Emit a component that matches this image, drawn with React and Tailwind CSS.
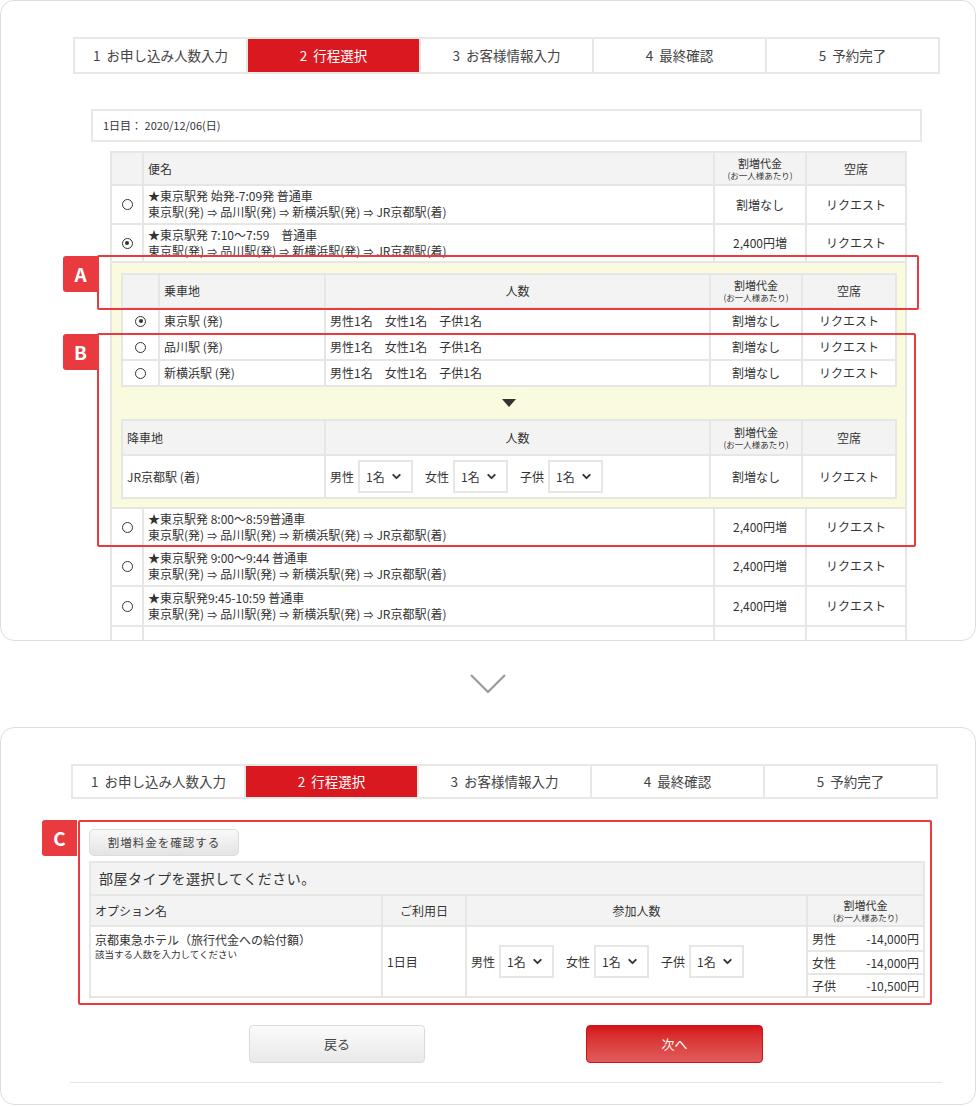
import React from "react";
import { ChevronDown } from "lucide-react";

const font = { fontFamily: '"Noto Sans CJK JP", "Noto Sans", sans-serif' };

const steps = [
  ["1", "お申し込み人数入力"],
  ["2", "行程選択"],
  ["3", "お客様情報入力"],
  ["4", "最終確認"],
  ["5", "予約完了"],
];

const Stepper = ({ h }) => (
  <div className={`flex w-[867px] border-2 border-[#e8e8e5] ${h}`}>
    {steps.map(([n, s], i) => (
      <div
        key={s}
        className={`flex flex-1 items-center justify-center text-[13.5px] ${
          i > 0 ? "border-l-2 border-[#e8e8e5]" : ""
        } ${i === 1 ? "bg-[#d9191f] text-white" : "text-[#444]"}`}
      >
        <span className="mr-[6px]">{n}</span>
        {s}
      </div>
    ))}
  </div>
);

const Radio = ({ on }) => (
  <span className="mx-auto flex h-[11px] w-[11px] items-center justify-center rounded-full border-[1.5px] border-[#333]">
    {on && <span className="h-[4px] w-[4px] rounded-full bg-[#333]" />}
  </span>
);

const Sel = () => (
  <span className="inline-flex h-[33px] w-[55px] items-center justify-between border-2 border-[#e6e6e2] bg-white pl-[6px] pr-[8px] text-[12px]">
    1名 <ChevronDown size={13} strokeWidth={3.5} className="text-[#333]" />
  </span>
);

const PriceHead = () => (
  <div className="flex flex-col items-center">
    <span className="block text-[11px] leading-[13px]">割増代金</span>
    <span className="block text-[8.5px] leading-[11px]">(お一人様あたり)</span>
  </div>
);

const td = "border-2 border-[#e6e6e2]";
const th = "border-2 border-[#e6e6e2] bg-[#f3f3f3] font-normal";

const Arrow = () => <span className="mx-[3px] text-[10px]">⇒</span>;

const Route = () => (
  <div>
    東京駅(発)
    <Arrow />
    品川駅(発)
    <Arrow />
    新横浜駅(発)
    <Arrow />
    JR京都駅(着)
  </div>
);

const TrainRow = ({ title, price, on, h = "h-[40px]" }) => (
  <tr className={h}>
    <td className={td}>
      <Radio on={on} />
    </td>
    <td className={`${td} pl-[4px] text-left leading-[16px]`}>
      <div>{title}</div>
      <Route />
    </td>
    <td className={td}>{price}</td>
    <td className={td}>リクエスト</td>
  </tr>
);

const Boarding = ({ name, on }) => (
  <tr className="h-[26px] bg-white">
    <td className={td}>
      <Radio on={on} />
    </td>
    <td className={`${td} pl-[4px] text-left`}>{name}</td>
    <td className={`${td} pl-[4px] text-left`}>男性1名　女性1名　子供1名</td>
    <td className={td}>割増なし</td>
    <td className={td}>リクエスト</td>
  </tr>
);

const Tag = ({ letter, cls }) => (
  <div
    className={`absolute flex h-[36px] w-[35px] items-center justify-center rounded-l-[3px] bg-[#e93a3f] text-[19px] font-bold text-white ${cls}`}
  >
    {letter}
  </div>
);

export default function App() {
  return (
    <div className="min-h-[1106px] w-[976px] bg-white text-[#333]" style={font}>
      {/* Card 1 */}
      <div className="relative h-[641px] overflow-hidden rounded-[14px] border border-[#dedede]">
        <div className="ml-[72px] pt-[36px]">
          <Stepper h="h-[37px]" />
        </div>
        <div className="ml-[90px] mt-[35px] flex h-[33px] w-[831px] items-center border-2 border-[#e8e8e5] pl-[10px] text-[11px]">
          1日目： 2020/12/06(日)
        </div>
        <table className="ml-[109px] mt-[9px] w-[795px] table-fixed border-collapse text-center text-[12px]">
          <colgroup>
            <col className="w-[32px]" />
            <col className="w-[571px]" />
            <col className="w-[92px]" />
            <col className="w-[100px]" />
          </colgroup>
          <tbody>
            <tr className="h-[33px]">
              <th className={th}></th>
              <th className={`${th} pl-[4px] text-left`}>便名</th>
              <th className={th}>
                <PriceHead />
              </th>
              <th className={th}>空席</th>
            </tr>
            <TrainRow title="★東京駅発 始発-7:09発 普通車" price="割増なし" h="h-[39px]" />
            <TrainRow title="★東京駅発 7:10〜7:59　普通車" price="2,400円増" on h="h-[38px]" />
            <tr>
              <td colSpan={4} className="border-2 border-[#e6e6e2] bg-[#fafadf] px-[9px] pb-[8px] pt-[10px]">
                <table className="w-full table-fixed border-collapse">
                  <colgroup>
                    <col className="w-[37px]" />
                    <col className="w-[166px]" />
                    <col className="w-[385px]" />
                    <col className="w-[92px]" />
                    <col className="w-[94px]" />
                  </colgroup>
                  <tbody>
                    <tr className="h-[34px]">
                      <th className={th}></th>
                      <th className={`${th} pl-[4px] text-left`}>乗車地</th>
                      <th className={th}>人数</th>
                      <th className={th}>
                        <PriceHead />
                      </th>
                      <th className={th}>空席</th>
                    </tr>
                    <Boarding name="東京駅 (発)" on />
                    <Boarding name="品川駅 (発)" />
                    <Boarding name="新横浜駅 (発)" />
                  </tbody>
                </table>
                <div className="flex h-[32px] items-center justify-center">
                  <svg width="14" height="8" viewBox="0 0 14 8">
                    <path d="M0 0 L14 0 L7 8 Z" fill="#333" />
                  </svg>
                </div>
                <table className="w-full table-fixed border-collapse">
                  <colgroup>
                    <col className="w-[203px]" />
                    <col className="w-[385px]" />
                    <col className="w-[92px]" />
                    <col className="w-[94px]" />
                  </colgroup>
                  <tbody>
                    <tr className="h-[35px]">
                      <th className={`${th} pl-[4px] text-left`}>降車地</th>
                      <th className={th}>人数</th>
                      <th className={th}>
                        <PriceHead />
                      </th>
                      <th className={th}>空席</th>
                    </tr>
                    <tr className="h-[43px] bg-white">
                      <td className={`${td} pl-[4px] text-left`}>JR京都駅 (着)</td>
                      <td className={`${td} pl-[4px] text-left`}>
                        <div className="flex items-center">
                          <span className="mr-[4px]">男性</span>
                          <Sel />
                          <span className="ml-[12px] mr-[4px]">女性</span>
                          <Sel />
                          <span className="ml-[12px] mr-[4px]">子供</span>
                          <Sel />
                        </div>
                      </td>
                      <td className={td}>割増なし</td>
                      <td className={td}>リクエスト</td>
                    </tr>
                  </tbody>
                </table>
              </td>
            </tr>
            <TrainRow title="★東京駅発 8:00〜8:59普通車" price="2,400円増" h="h-[38px]" />
            <TrainRow title="★東京駅発 9:00〜9:44 普通車" price="2,400円増" />
            <TrainRow title="★東京駅発9:45-10:59 普通車" price="2,400円増" />
            <tr className="h-[40px]">
              <td className={td}></td>
              <td className={td}></td>
              <td className={td}></td>
              <td className={td}></td>
            </tr>
          </tbody>
        </table>

        <div className="absolute left-[96px] top-[254px] h-[55px] w-[822px] rounded-[2px] border-2 border-[#e93a3f]" />
        <Tag letter="A" cls="left-[62px] top-[255px]" />
        <div className="absolute left-[96px] top-[332px] h-[214px] w-[819px] rounded-[2px] border-2 border-[#e93a3f]" />
        <Tag letter="B" cls="left-[62px] top-[333px]" />
      </div>

      {/* arrow between */}
      <div className="flex h-[86px] items-center justify-center">
        <svg width="38" height="22" viewBox="0 0 38 22">
          <path d="M2 2 L19 19 L36 2" fill="none" stroke="#9a9a9a" strokeWidth="2.2" />
        </svg>
      </div>

      {/* Card 2 */}
      <div className="relative h-[378px] rounded-[14px] border border-[#dedede]">
        <div className="ml-[70px] pt-[36px]">
          <Stepper h="h-[35px]" />
        </div>
        <div className="ml-[88px] mt-[30px] flex h-[27px] w-[150px] items-center justify-center rounded-[5px] border border-[#dcdcdc] bg-gradient-to-b from-[#f9f9f9] to-[#e4e4e4] text-[11.5px] tracking-[1px] text-[#444]">
          割増料金を確認する
        </div>
        <table className="ml-[88px] mt-[5px] w-[834px] table-fixed border-collapse text-[12px]">
          <colgroup>
            <col className="w-[292px]" />
            <col className="w-[84px]" />
            <col className="w-[341px]" />
            <col className="w-[117px]" />
          </colgroup>
          <tbody>
            <tr className="h-[33px]">
              <th colSpan={4} className={`${th} pl-[8px] text-left text-[14px] tracking-[0.5px]`}>
                部屋タイプを選択してください。
              </th>
            </tr>
            <tr className="h-[31px]">
              <th className={`${th} pl-[4px] text-left`}>オプション名</th>
              <th className={th}>ご利用日</th>
              <th className={th}>参加人数</th>
              <th className={th}>
                <PriceHead />
              </th>
            </tr>
            <tr className="h-[71px]">
              <td className={`${td} pl-[4px] pt-[4px] align-top leading-[17px]`}>
                <div>京都東急ホテル（旅行代金への給付額）</div>
                <div className="text-[9.5px] leading-[12px]">該当する人数を入力してください</div>
              </td>
              <td className={`${td} pl-[4px]`}>1日目</td>
              <td className={`${td} pl-[4px]`}>
                <div className="flex items-center">
                  <span className="mr-[4px]">男性</span>
                  <Sel />
                  <span className="ml-[12px] mr-[4px]">女性</span>
                  <Sel />
                  <span className="ml-[12px] mr-[4px]">子供</span>
                  <Sel />
                </div>
              </td>
              <td className="border-2 border-[#e6e6e2] p-0">
                {[
                  ["男性", "-14,000円"],
                  ["女性", "-14,000円"],
                  ["子供", "-10,500円"],
                ].map(([k, v], i) => (
                  <div
                    key={k}
                    className={`flex h-[23px] items-center justify-between px-[4px] ${
                      i > 0 ? "border-t-2 border-[#e6e6e2]" : ""
                    }`}
                  >
                    <span>{k}</span>
                    <span>{v}</span>
                  </div>
                ))}
              </td>
            </tr>
          </tbody>
        </table>

        <div className="ml-[248px] mt-[27px] flex gap-[161px]">
          <div className="flex h-[38px] w-[176px] items-center justify-center rounded-[4px] border border-[#dadada] bg-gradient-to-b from-[#fbfbfb] to-[#e9e9e9] text-[13px] text-[#444]">
            戻る
          </div>
          <div className="flex h-[38px] w-[177px] items-center justify-center rounded-[4px] border border-[#c8141a] bg-gradient-to-b from-[#d60f17] to-[#e05a5c] text-[13px] text-white">
            次へ
          </div>
        </div>
        <div className="ml-[69px] mt-[19px] h-px w-[872px] bg-[#e4e4e4]" />

        <div className="absolute left-[77px] top-[92px] h-[185px] w-[854px] rounded-[2px] border-2 border-[#e93a3f]" />
        <Tag letter="C" cls="left-[41px] top-[92px]" />
      </div>
    </div>
  );
}
